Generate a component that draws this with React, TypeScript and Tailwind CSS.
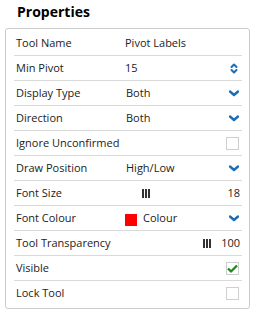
import React from "react";

function Chevron() {
  return (
    <svg width="10" height="7" viewBox="0 0 10 7" className="mr-[1px]">
      <path d="M1 1.5 L5 5 L9 1.5" fill="none" stroke="#1c6db3" strokeWidth="2.4" strokeLinecap="round" strokeLinejoin="round" />
    </svg>
  );
}

function Spinner() {
  return (
    <svg width="8" height="11" viewBox="0 0 8 11" className="mr-[2px]">
      <path d="M1.5 4 L4 1.5 L6.5 4" fill="none" stroke="#1c6db3" strokeWidth="2" strokeLinecap="round" strokeLinejoin="round" />
      <path d="M1.5 7 L4 9.5 L6.5 7" fill="none" stroke="#1c6db3" strokeWidth="2" strokeLinecap="round" strokeLinejoin="round" />
    </svg>
  );
}

function Bars() {
  return (
    <svg width="8" height="9" viewBox="0 0 8 9">
      <rect x="0" y="0" width="2" height="9" fill="#333" />
      <rect x="3" y="0" width="2" height="9" fill="#333" />
      <rect x="6" y="0" width="2" height="9" fill="#333" />
    </svg>
  );
}

function Checkbox({ checked }: { checked?: boolean }) {
  return (
    <div className="w-[13px] h-[13px] border border-[#cfcfcf] bg-white flex items-center justify-center mr-[1px]">
      {checked && (
        <svg width="11" height="9" viewBox="0 0 11 9">
          <path d="M1 4.5 L4 7.5 L10 1.5" fill="none" stroke="#1e8c1e" strokeWidth="2.4" strokeLinejoin="round" />
        </svg>
      )}
    </div>
  );
}

function Row({ label, children, last }: { label: string; children?: React.ReactNode; last?: boolean }) {
  return (
    <div className={"h-[25px] flex items-center px-[2px] " + (last ? "" : "border-b border-[#d9d9d9]")}>
      <div className="w-[109px] shrink-0 whitespace-nowrap">{label}</div>
      <div className="flex-1 flex items-center">{children}</div>
    </div>
  );
}

export default function App() {
  return (
    <div className="w-[257px] h-[313px] bg-white text-[#222] text-[11px]" style={{ fontFamily: '"Open Sans", sans-serif' }}>
      <div className="pl-[17px] pt-[1px] h-[28px] text-[14px] font-bold text-black">Properties</div>
      <div className="ml-[5px] w-[245px] border border-[#cccccc] rounded-[3px] pl-[8px] pr-[7px] pt-[2px] pb-[2px]">
        <Row label="Tool Name">Pivot Labels</Row>
        <Row label="Min Pivot">
          <span className="flex-1">15</span>
          <Spinner />
        </Row>
        <Row label="Display Type">
          <span className="flex-1 pl-[1px]">Both</span>
          <Chevron />
        </Row>
        <Row label="Direction">
          <span className="flex-1 pl-[1px]">Both</span>
          <Chevron />
        </Row>
        <Row label="Ignore Unconfirmed">
          <span className="flex-1" />
          <Checkbox />
        </Row>
        <Row label="Draw Position">
          <span className="flex-1 pl-[1px]">High/Low</span>
          <Chevron />
        </Row>
        <Row label="Font Size">
          <span className="flex-1 pl-[17px] flex items-center">
            <Bars />
          </span>
          <span>18</span>
        </Row>
        <Row label="Font Colour">
          <span className="flex-1 flex items-center">
            <span className="w-[12px] h-[12px] bg-[#ff0000] mt-[3px]" />
            <span className="ml-[6px]">Colour</span>
          </span>
          <Chevron />
        </Row>
        <Row label="Tool Transparency">
          <span className="flex-1 flex justify-end pr-[10px]">
            <Bars />
          </span>
          <span>100</span>
        </Row>
        <Row label="Visible">
          <span className="flex-1" />
          <Checkbox checked />
        </Row>
        <Row label="Lock Tool" last>
          <span className="flex-1" />
          <Checkbox />
        </Row>
      </div>
    </div>
  );
}
